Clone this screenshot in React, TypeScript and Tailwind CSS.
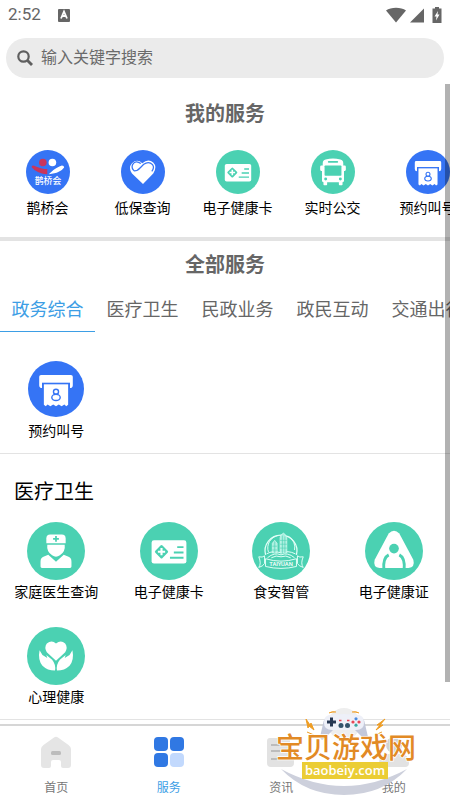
import type { ReactNode } from 'react';

const BLUE = '#3574f5';
const GREEN = '#4bd1b2';

const myServices = [
  { name: '鹊桥会', icon: <BridgeIcon /> },
  { name: '低保查询', icon: <HeartIcon /> },
  { name: '电子健康卡', icon: <HealthCardIcon /> },
  { name: '实时公交', icon: <BusIcon /> },
  { name: '预约叫号', icon: <TicketIcon /> },
];

const tabs = ['政务综合', '医疗卫生', '民政业务', '政民互动', '交通出行'];

const medicalServices = [
  { name: '家庭医生查询', icon: <DoctorIcon /> },
  { name: '电子健康卡', icon: <HealthCardIcon /> },
  { name: '食安智管', icon: <CityIcon /> },
  { name: '电子健康证', icon: <CertificateIcon /> },
  { name: '心理健康', icon: <CareIcon /> },
];

export default function App() {
  return (
    <div className="relative flex min-h-screen flex-col overflow-hidden bg-white font-['Roboto','Noto_Sans_CJK_SC',sans-serif] text-[#666]">
      <StatusBar />
      <SearchBar />

      <main className="relative mt-1.5 grow">
        <section>
          <h2 className="pt-3.5 text-center text-xl leading-8 font-bold">我的服务</h2>
          <ul className="flex overflow-hidden pt-5 pb-[19px]">
            {myServices.map((item) => (
              <li key={item.name} className="w-[95px] shrink-0">
                <ServiceButton name={item.name} icon={item.icon} size="size-11 mb-1" />
              </li>
            ))}
          </ul>
        </section>

        <section className="border-t-4 border-[#e3e3e3]">
          <h2 className="pt-2 text-center text-xl leading-8 font-bold">全部服务</h2>
          <nav className="mt-2 flex overflow-hidden">
            {tabs.map((tab, i) => (
              <button
                key={tab}
                type="button"
                className={
                  i === 0
                    ? 'w-[95px] shrink-0 border-b border-[#3d9ee5] text-lg leading-[42px] whitespace-nowrap text-[#3d9ee5]'
                    : 'w-[95px] shrink-0 border-b border-transparent text-lg leading-[42px] whitespace-nowrap'
                }
              >
                {tab}
              </button>
            ))}
          </nav>
          <ul className="grid grid-cols-4 border-b border-[#e3e3e3] pt-[29px] pb-3">
            <li>
              <ServiceButton name="预约叫号" icon={<TicketIcon />} size="size-14 mb-1" />
            </li>
          </ul>
        </section>

        <section className="border-b border-[#e3e3e3] pb-3">
          <h3 className="px-3.5 pt-5 text-xl leading-9 text-black">医疗卫生</h3>
          <ul className="grid grid-cols-4 gap-y-[25px] pt-3">
            {medicalServices.map((item) => (
              <li key={item.name}>
                <ServiceButton name={item.name} icon={item.icon} size="size-[58px] mb-0.5" />
              </li>
            ))}
          </ul>
        </section>

        {/* Scroll indicator */}
        <div className="absolute top-0 right-0 h-[94%] w-[5px] bg-black/30" />
      </main>

      <TabBar />
      <Watermark />
    </div>
  );
}

function StatusBar() {
  return (
    <header className="flex h-[30px] items-center px-2">
      <span className="text-[17px]">2:52</span>
      <svg className="ml-4 size-3.5" viewBox="0 0 14 14">
        <rect x="1" y="1" width="12" height="13" rx="1" fill="#666" />
        <path d="M4 10.500 7 3.500l3 7M5.200 8h3.600" fill="none" stroke="#fff" strokeWidth="1.800" />
      </svg>
      <div className="ml-auto flex items-center">
        <svg className="h-4 w-5" viewBox="0 0 20 16">
          <path d="M0 3.500C5-.3 15-.3 20 3.500L10 15.500z" fill="#666" />
        </svg>
        <svg className="ml-1 h-4 w-3.5" viewBox="0 0 14 16">
          <path d="M14 1.500V15.500H0z" fill="#666" />
        </svg>
        <svg className="ml-2 h-4 w-2.5" viewBox="0 0 10 16">
          <path d="M3 0h4v1.500h2.500V16H.5V1.500H3z" fill="#666" />
          <path d="M6 4 2.500 9.500h2l-.5 4 3.500-6h-2z" fill="#fff" />
        </svg>
      </div>
    </header>
  );
}

function SearchBar() {
  return (
    <label className="mx-1.5 mt-2 flex h-10 items-center rounded-full bg-[#ebebeb] pl-[11px]">
      <svg className="size-4" viewBox="0 0 16 16" fill="none" stroke="#5f5f5f">
        <circle cx="6.500" cy="6.500" r="5.200" strokeWidth="2.200" />
        <path d="m10.500 10.500 4.500 4.500" strokeWidth="2.800" />
      </svg>
      <input
        type="search"
        aria-label="搜索"
        placeholder="输入关键字搜索"
        className="ml-2 grow bg-transparent text-base outline-none placeholder:text-[#6a6a6a]"
      />
    </label>
  );
}

function ServiceButton({ name, icon, size }: { name: string; icon: ReactNode; size: string }) {
  return (
    <button type="button" className="flex w-full flex-col items-center text-black">
      <span className={size}>{icon}</span>
      <span className="text-sm leading-5 whitespace-nowrap">{name}</span>
    </button>
  );
}

function TabBar() {
  return (
    <footer className="mt-1 grid h-[76px] shrink-0 grid-cols-4 border-t-2 border-[#d6d6d6] text-xs text-[#777]">
      <TabItem label="首页">
        <path d="M14 1.500q2-1.500 4 0L28.500 9Q31 11 31 13v16q0 3-3 3h-5q-2 0-2-2v-4q0-2-2-2h-6q-2 0-2 2v4q0 2-2 2H4q-3 0-3-3V13q0-2 2.500-4z" fill="#e5e5e5" />
        <rect x="11" y="15" width="10" height="4" rx="1.500" fill="#bcbcbc" />
      </TabItem>
      <TabItem label="服务" active>
        <rect x="1" y="1" width="14" height="14" rx="4" fill="#3078e3" />
        <rect x="17" y="1" width="14" height="14" rx="4" fill="#3078e3" />
        <rect x="1" y="17" width="14" height="14" rx="4" fill="#3078e3" />
        <rect x="17" y="17" width="14" height="14" rx="4" fill="#c2d9fd" />
      </TabItem>
      <TabItem label="资讯">
        <path d="M5 2h17q3 0 3 3v19h4v3q0 4-4 4H6q-4 0-4-4V5q0-3 3-3z" fill="#e2e2e2" />
        <path d="M6 9h13M6 15h9M6 23h12" stroke="#bcbcbc" strokeWidth="2" />
      </TabItem>
      <TabItem label="我的">
        <path d="M1 27q0-9 9-9h12q9 0 9 9 0 4-4 4H5q-4 0-4-4z" fill="#e2e2e2" />
        <circle cx="16" cy="9" r="8" fill="#d2d2d2" />
      </TabItem>
    </footer>
  );
}

function TabItem({ label, active, children }: { label: string; active?: boolean; children: ReactNode }) {
  return (
    <a href="#" className="flex flex-col items-center pt-2.5">
      <svg className="size-8" viewBox="0 0 32 32">
        {children}
      </svg>
      <span className={active ? 'mt-2.5 leading-5 text-[#3d9ee5]' : 'mt-2.5 leading-5'}>{label}</span>
    </a>
  );
}

function Disc({ color, children }: { color: string; children: ReactNode }) {
  return (
    <svg className="size-full" viewBox="0 0 60 60">
      <circle cx="30" cy="30" r="30" fill={color} />
      {children}
    </svg>
  );
}

function BridgeIcon() {
  return (
    <Disc color={BLUE}>
      <circle cx="23" cy="17" r="5.200" fill="#c9355c" />
      <circle cx="36" cy="17" r="5.200" fill="#fff" />
      <path d="M10 21q-3 0-2 3 3 4 9 6.500 6 2.500 12 2.500v-7q-8 0-19-5z" fill="#c9355c" />
      <path d="M31 33q9-1 13-3 6-2.500 8-6 0-3-3-3-3 1-8 4-4 2-10 8z" fill="#fff" />
      <text x="30" y="46.500" textAnchor="middle" fontSize="12" fontWeight="500" fill="#fff">鹊桥会</text>
    </Disc>
  );
}

function HeartIcon() {
  return (
    <Disc color={BLUE}>
      <path d="M30 46.500 15 32q-5.500-8 0-14 7-6.500 14 0Q37 11 44 17q6 6 0 15z" fill="#fff" />
      <path d="M27 18.500q-7-5-11 1-2.500 5 2 9 5 0 8-4l5-5q7-5 12 .5 3 4-1 9" fill="none" stroke={BLUE} strokeWidth="1.700" />
    </Disc>
  );
}

function HealthCardIcon() {
  return (
    <Disc color={GREEN}>
      <rect x="12" y="19" width="36" height="24" rx="2.500" fill="#fff" />
      <rect x="17" y="25.500" width="10.500" height="10.500" rx="1.500" transform="rotate(45 22.250 30.750)" fill={GREEN} />
      <path d="M22.250 27v7.500M18.500 30.750H26" stroke="#fff" strokeWidth="2.200" />
      <path d="M38.500 26H45M35 31.500h10M31 37h14" stroke={GREEN} strokeWidth="2" />
    </Disc>
  );
}

function BusIcon() {
  return (
    <Disc color={GREEN}>
      <path d="M20 13q10-3 20 0 4 1 4 5v3h2q1.500 0 1.500 2v4q0 1.500-1.500 1.500h-1V42q0 2-2 2v3q0 1-1 1h-3q-1 0-1-1v-3H22v3q0 1-1 1h-3q-1 0-1-1v-3q-2 0-2-2V28.500h-1q-1.500 0-1.500-1.500v-4q0-2 1.500-2h2v-3q0-4 4-5z" fill="#fff" />
      <rect x="18.500" y="21" width="23" height="14" rx="1" fill={GREEN} />
      <rect x="23" y="15" width="14" height="2.500" rx="1" fill={GREEN} />
      <circle cx="20" cy="39.500" r="2" fill={GREEN} />
      <circle cx="40" cy="39.500" r="2" fill={GREEN} />
    </Disc>
  );
}

function TicketIcon() {
  return (
    <Disc color={BLUE}>
      <path d="M14 15h32q2 0 2 2v9q0 3-3 3V24H15v5q-3 0-3-3v-9q0-2 2-2z" fill="#fff" />
      <path d="M17 25h26v22l-2 1.500-2-2-3 2-3-2-3 2-3-2-3 2-3-2-2 2-2-1.500z" fill="#fff" />
      <path d="M15 24h30" stroke={BLUE} strokeWidth="1.500" />
      <circle cx="30" cy="33" r="2.700" fill="none" stroke={BLUE} strokeWidth="1.500" />
      <ellipse cx="30" cy="39" rx="4.500" ry="3.300" fill="none" stroke={BLUE} strokeWidth="1.500" />
    </Disc>
  );
}

function DoctorIcon() {
  return (
    <Disc color={GREEN}>
      <path d="M24 13h12q4 0 4 4v5H20v-5q0-4 4-4z" fill="#fff" />
      <path d="M30 14.500v6M27 17.500h6" stroke={GREEN} strokeWidth="1.800" />
      <path d="M21 23.500h18q1 7-5 11-4 3-8 0-6-4-5-11z" fill="#fff" />
      <path d="m22 34 8 7 8-7 5 2q3 1 3 5v5q0 1.500-1.500 1.500h-29Q14 47.500 14 46v-5q0-4 3-5z" fill="#fff" />
    </Disc>
  );
}

function CityIcon() {
  return (
    <Disc color={GREEN}>
      <g fill="none" stroke="#e4fff8" strokeWidth="1">
        <path d="M14 34a16.500 16.500 0 1 1 32 0" strokeWidth="1.300" />
        <path d="M17 31a13 13 0 0 1 10-17M38 15a13 13 0 0 1 6 14" />
        <path d="M15 33q7-4 15-1 7-3 15 1M16 37q7-6 14-3 7-3 14 3M20 37q5-3 10-1 5-2 10 1" />
        <path d="M7 36q4 1 6-1v8q-2 3-6 4 3-4 0-11zM53 36q-4 1-6-1v8q2 3 6 4-3-4 0-11z" />
        <path d="M14 38q16 5 32 0v8q-16 4-32 0z" />
      </g>
      <path d="M21 32V22l2.500-3 2.500 3v10zM29 32V16l1.500-3 2-1.500 2 1.500 1.500 3v16z" fill="#a9efdf" stroke="#e4fff8" strokeWidth=".6" />
      <path d="M23.500 20v12M31.500 14v18M34 15v17M29 19h7M29 23h7M29 27h7M21 25h5M21 29h5" stroke={GREEN} strokeWidth=".6" />
      <text x="30" y="46" textAnchor="middle" fontSize="6" fontWeight="500" fill="#fff">TAIYUAN</text>
    </Disc>
  );
}

function CertificateIcon() {
  return (
    <Disc color={GREEN}>
      <path d="M24.500 12q5.500-6 11 0L50 39q2 8-5 8.500H15Q8 47 10 39z" fill="#fff" />
      <circle cx="30" cy="27.500" r="5" fill={GREEN} />
      <path d="M19.500 49q-1-12 5-15M40.500 49q1-12-5-15" fill="none" stroke={GREEN} strokeWidth="3" />
    </Disc>
  );
}

function CareIcon() {
  return (
    <Disc color={GREEN}>
      <path d="M30 35 20.500 26q-3-5 0-9 5-4 9.500 0 5-4 9.500 0 3 4 0 9z" fill="#fff" />
      <path d="M13 24q-2 10 3 16 5 5 13 5 1-6-3-11l-6-5 1 3-5-3zM47 24q2 10-3 16-5 5-13 5-1-6 3-11l6-5-1 3 5-3z" fill="#fff" />
    </Disc>
  );
}

function Watermark() {
  return (
    <div className="pointer-events-none absolute right-8 bottom-1 w-[142px]">
      <svg className="block w-full" viewBox="0 0 142 90">
        <path d="M5 63Q68 97 131 63 106 89 68 89 30 89 5 63z" fill="#cdd0dc" />
        <circle cx="68" cy="18" r="16" fill="#eee" />
        <path d="M53 10q15-3 30 0 5 1 6 8l3 13q-1 5-5 1l-8-8H57l-8 8q-4 4-5-1l3-13q1-7 6-8z" fill="#c3c8da" />
        <path d="M53 9q15-2 30 0 5 1 5 8t-8 7H56q-8 0-8-7t5-8z" fill="#eef0f8" />
        <path d="M55.500 11.500v9M51 16h9" stroke="#263752" strokeWidth="3" />
        <g fill="#33536b">
          <circle cx="65" cy="19.500" r="2.500" />
          <circle cx="71.500" cy="19.500" r="2.500" />
        </g>
        <path d="M63 14.500h2.500M71 14.500h2.500" stroke="#e84654" strokeWidth="1.500" />
        <circle cx="77" cy="16" r="1.600" fill="#e84654" />
        <circle cx="83" cy="16" r="1.600" fill="#e84654" />
        <circle cx="80" cy="12.800" r="1.600" fill="#4b8be0" />
        <circle cx="80" cy="19.200" r="1.600" fill="#3aa7a0" />
        <path d="m30 13 4 6 1-2 3 7-5-4-1 2zM109 13l-8 6h3l-4 5 7-5h-3zM31 26l7 3M106 26l-7 3M53 7q3-2 7-1M76 6q4-1 7 1" fill="#ef9d22" stroke="#ef9d22" />
        <text x="70" y="52" textAnchor="middle" fontSize="28" fontWeight="500" fill="#e28a25" stroke="#fff" strokeWidth="1.500" paintOrder="stroke">宝贝游戏网</text>
        <rect x="26" y="56" width="86" height="17" fill="#ebcd35" />
        <text x="69" y="69" textAnchor="middle" fontSize="13" fontWeight="600" fill="#fff" fontFamily="Open Sans, sans-serif">baobeiy.com</text>
      </svg>
    </div>
  );
}
